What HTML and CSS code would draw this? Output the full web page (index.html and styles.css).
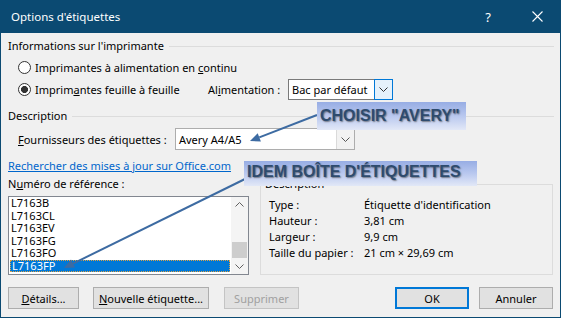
FILE: index.html
```html
<!DOCTYPE html>
<html lang="fr">
<head>
<meta charset="utf-8">
<title>Options d'étiquettes</title>
<link rel="stylesheet" href="styles.css">
</head>
<body>
<div class="window">
  <div class="titlebar">
    <span class="title">Options d'étiquettes</span>
    <span class="help">?</span>
    <span class="close"><svg width="11" height="11" viewBox="0 0 11 11"><path d="M0.5 0.5L10.5 10.5M10.5 0.5L0.5 10.5" stroke="#fff" stroke-width="1.1" fill="none"/></svg></span>
  </div>
  <div class="content">
    <div class="group-head"><span>Informations sur l'imprimante</span><span class="rule"></span></div>
    <div class="radio-row first">
      <span class="radio"></span><span>Imprimantes à alimentation en <u>c</u>ontinu</span>
    </div>
    <div class="radio-row second">
      <div class="radio-item"><span class="radio checked"></span><span>Imprim<u>a</u>ntes feuille à feuille</span></div>
      <span class="feed-label">Al<u>i</u>mentation :</span>
      <div class="combo combo-feed">
        <span class="combo-text">Bac par défaut</span>
        <span class="combo-btn hot"><svg width="9" height="5" viewBox="0 0 9 5"><path d="M0.5 0.5L4.5 4.5L8.5 0.5" stroke="#333" fill="none"/></svg></span>
      </div>
    </div>
    <div class="group-head desc-head"><span>Description</span><span class="rule"></span></div>
    <div class="field-row">
      <span class="vendor-label"><u>F</u>ournisseurs des étiquettes :</span>
      <div class="combo combo-vendor">
        <span class="combo-text">Avery A4/A5</span>
        <span class="combo-btn plain"><svg width="9" height="5" viewBox="0 0 9 5"><path d="M0.5 0.5L4.5 4.5L8.5 0.5" stroke="#555" fill="none"/></svg></span>
      </div>
    </div>
    <div class="link-row"><a class="link" href="#">Rechercher des mises à jour sur Office.com</a></div>
    <div class="lower">
      <div class="product">
        <div class="product-label">N<u>u</u>méro de référence :</div>
        <div class="listbox">
          <div class="items">
            <div class="item">L7163B</div>
            <div class="item">L7163CL</div>
            <div class="item">L7163EV</div>
            <div class="item">L7163FG</div>
            <div class="item">L7163FO</div>
            <div class="item selected">L7163FP</div>
          </div>
          <div class="scrollbar">
            <span class="sb-btn"><svg width="9" height="5" viewBox="0 0 9 5"><path d="M0.5 4.5L4.5 0.5L8.5 4.5" stroke="#606060" fill="none"/></svg></span>
            <span class="sb-track"><span class="sb-thumb"></span></span>
            <span class="sb-btn"><svg width="9" height="5" viewBox="0 0 9 5"><path d="M0.5 0.5L4.5 4.5L8.5 0.5" stroke="#606060" fill="none"/></svg></span>
          </div>
        </div>
      </div>
      <fieldset class="details">
        <legend>Description</legend>
        <div class="detail-grid">
          <span>Type :</span><span>Étiquette d'identification</span>
          <span>Hauteur :</span><span>3,81 cm</span>
          <span>Largeur :</span><span>9,9 cm</span>
          <span>Taille du papier :</span><span>21 cm × 29,69 cm</span>
        </div>
      </fieldset>
    </div>
    <div class="buttons">
      <button class="btn btn-details"><u>D</u>étails...</button>
      <button class="btn btn-new"><u>N</u>ouvelle étiquette...</button>
      <button class="btn btn-del" disabled>Supprimer</button>
      <button class="btn btn-ok">OK</button>
      <button class="btn btn-cancel">Annuler</button>
    </div>
  </div>
  <svg class="arrows" width="562" height="319" viewBox="0 0 562 319">
    <line x1="317" y1="115" x2="259.3" y2="137.4" stroke="#3d6ba2" stroke-width="2"/>
    <polygon points="250,141 260.9,141.6 257.7,133.2" fill="#3d6ba2"/>
    <line x1="245" y1="179" x2="73" y2="263.6" stroke="#3d6ba2" stroke-width="2"/>
    <polygon points="64,268 75,267.6 71,259.6" fill="#3d6ba2"/>
  </svg>
  <div class="callout callout-avery">CHOISIR "AVERY"</div>
  <div class="callout callout-idem">IDEM BOÎTE D'ÉTIQUETTES</div>
</div>
</body>
</html>
```

FILE: styles.css
```css
html, body {
  margin: 0;
  padding: 0;
  background: #ffffff;
}

body {
  font-family: "Noto Sans", "Open Sans", sans-serif;
  font-size: 11px;
  color: #000;
}

.window {
  position: relative;
  width: 561px;
  height: 318px;
  box-sizing: border-box;
  border: 1px solid #0b4a72;
  border-top: 0;
  background: #f0f0f0;
  display: flex;
  flex-direction: column;
  overflow: hidden;
}

.titlebar {
  height: 33px;
  flex: none;
  background: #0b4a72;
  color: #fff;
  display: flex;
  align-items: center;
  padding-left: 10px;
}

.title {
  flex: 1;
  font-size: 11.5px;
}

.help {
  width: 20px;
  margin-right: 16px;
  text-align: center;
  font-size: 13px;
}

.close {
  width: 46px;
  display: flex;
  justify-content: center;
  align-items: center;
}

.content {
  padding: 0 6px 0 7px;
  display: flex;
  flex-direction: column;
}

.group-head {
  display: flex;
  align-items: center;
  height: 16px;
  line-height: 16px;
  margin-top: 5px;
}

.group-head .rule {
  flex: 1;
  height: 0;
  border-top: 1px solid #dcdcdc;
  margin-left: 5px;
}

.desc-head {
  margin-top: 8px;
}

.radio-row {
  display: flex;
  align-items: center;
  margin-left: 10px;
}

.radio-row.first {
  height: 20px;
  margin-top: 3px;
}

.radio-row.second {
  height: 21px;
  margin-top: 2px;
}

.radio-item {
  width: 190px;
  display: flex;
  align-items: center;
}

.radio {
  width: 13px;
  height: 13px;
  box-sizing: border-box;
  border: 1px solid #333;
  border-radius: 50%;
  background: #fff;
  margin-right: 4px;
  flex: none;
}

.radio.checked {
  background: radial-gradient(circle, #333 0, #333 3.2px, #fff 3.8px);
}

.feed-label {
  width: 80px;
}

.combo {
  display: flex;
  height: 21px;
  box-sizing: border-box;
  border: 1px solid #7a7a7a;
  background: #fff;
}

.combo-text {
  flex: 1;
  padding-left: 3px;
  display: flex;
  align-items: center;
}

.combo-btn {
  width: 17px;
  display: flex;
  align-items: center;
  justify-content: center;
}

.combo-btn.hot {
  margin: -1px -1px -1px 0;
  border: 1px solid #0078d7;
  background: #e5f1fb;
}

.combo-btn.plain {
  border-left: 1px solid #dadada;
  background: #f2f2f2;
}

.combo-feed {
  width: 105px;
}

.field-row {
  display: flex;
  align-items: center;
  height: 22px;
  margin-top: 4px;
  margin-left: 10px;
}

.vendor-label {
  width: 157px;
}

.combo-vendor {
  width: 180px;
  height: 22px;
  border-color: #adadad;
}

.link-row {
  margin-top: 8px;
  line-height: 16px;
}

.link {
  color: #0066cc;
  text-decoration: underline;
}

.lower {
  display: flex;
  gap: 11px;
  margin-top: 2px;
}

.product {
  width: 241px;
}

.product-label {
  line-height: 16px;
}

.listbox {
  margin-top: 4px;
  height: 79px;
  box-sizing: border-box;
  border: 1px solid #828790;
  background: #fff;
  display: flex;
}

.items {
  flex: 1;
  overflow: hidden;
}

.item {
  height: 12.6px;
  line-height: 12.6px;
  padding-left: 2px;
}

.item.selected {
  margin: 0 1px;
  padding-left: 1px;
  box-sizing: border-box;
  height: 12px;
  line-height: 10px;
  background: #0078d7;
  color: #fff;
  border: 1px dotted #e0a244;
}

.scrollbar {
  width: 17px;
  background: #f4f4f4;
  display: flex;
  flex-direction: column;
}

.sb-btn {
  height: 15px;
  display: flex;
  align-items: center;
  justify-content: center;
}

.sb-track {
  flex: 1;
  display: flex;
  flex-direction: column;
  justify-content: flex-end;
  padding-bottom: 1px;
}

.sb-thumb {
  height: 16px;
  margin: 0 1px;
  background: #cdcdcd;
}

.details {
  width: 293px;
  box-sizing: border-box;
  margin: 0;
  padding: 5px 8px 12px 8px;
  border: 1px solid #dcdcdc;
  min-width: 0;
}

.details legend {
  padding: 0 1px;
  margin-left: -5px;
  line-height: 16px;
}

.detail-grid {
  display: grid;
  grid-template-columns: 95px 1fr;
  line-height: 16px;
}

.buttons {
  display: flex;
  margin-top: 12px;
  margin-right: 1px;
}

.btn {
  height: 22px;
  box-sizing: border-box;
  border: 1px solid #adadad;
  background: #e1e1e1;
  font-family: "Noto Sans", "Open Sans", sans-serif;
  font-size: 11px;
  color: #000;
  padding: 0;
  margin: 0;
}

.btn-details {
  width: 71px;
}

.btn-new {
  width: 116px;
  margin-left: 14px;
}

.btn-del {
  width: 75px;
  margin-left: 15px;
  color: #a0a0a0;
  border-color: #c4c4c4;
}

.btn-ok {
  width: 74px;
  margin-left: auto;
  border: 2px solid #0078d7;
}

.btn-cancel {
  width: 74px;
  margin-left: 10px;
}

.arrows {
  position: absolute;
  left: -1px;
  top: 0;
  pointer-events: none;
}

.callout {
  position: absolute;
  box-sizing: border-box;
  background: linear-gradient(to bottom, #97ade4 0%, #b9c8ef 50%, #e2e8f7 100%);
  font-family: "Liberation Sans", Arial, sans-serif;
  font-weight: bold;
  font-size: 16px;
  color: #2e4b6e;
  text-shadow: 1px 1px 1.5px rgba(40, 40, 40, 0.55);
  white-space: nowrap;
  display: flex;
  align-items: center;
  padding-left: 3px;
}

.callout-avery {
  left: 316px;
  top: 102px;
  width: 149px;
  height: 28px;
}

.callout-idem {
  left: 243px;
  top: 161px;
  width: 233px;
  height: 25px;
  padding-bottom: 3px;
}
```
